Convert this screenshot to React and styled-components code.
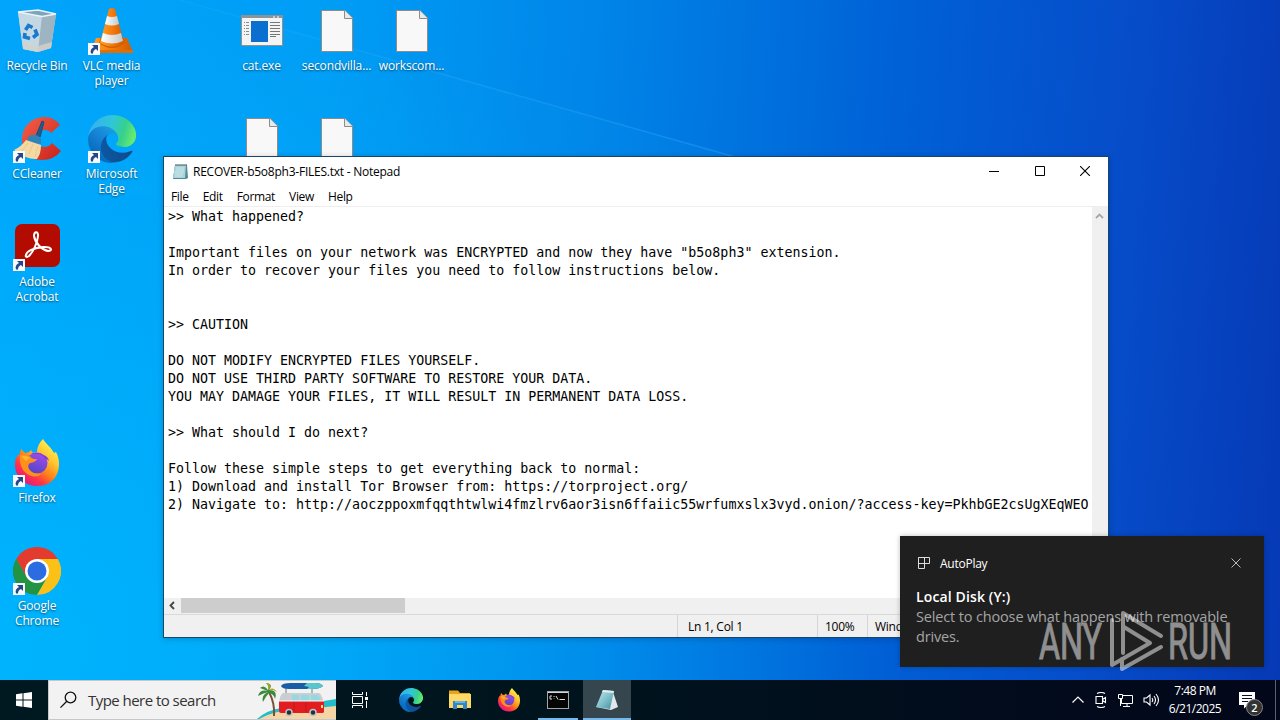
import React from 'react';
import styled, { createGlobalStyle } from 'styled-components';

const NOTE = `>> What happened?

Important files on your network was ENCRYPTED and now they have "b5o8ph3" extension.
In order to recover your files you need to follow instructions below.


>> CAUTION

DO NOT MODIFY ENCRYPTED FILES YOURSELF.
DO NOT USE THIRD PARTY SOFTWARE TO RESTORE YOUR DATA.
YOU MAY DAMAGE YOUR FILES, IT WILL RESULT IN PERMANENT DATA LOSS.

>> What should I do next?

Follow these simple steps to get everything back to normal:
1) Download and install Tor Browser from: https://torproject.org/
2) Navigate to: http://aoczppoxmfqqthtwlwi4fmzlrv6aor3isn6ffaiic55wrfumxslx3vyd.onion/?access-key=PkhbGE2csUgXEqWEO`;

// ---------- icons ----------

const RecycleIcon = () => (
    <svg width="48" height="48" viewBox="0 0 48 48">
        <path d="M5 5L25 3L43 7L38 41L25 45L10 42Z" fill="#b9cfdb" />
        <path d="M5 5L29 9L25 45L10 42Z" fill="#c3d8e3" />
        <path d="M29 9L43 7L38 41L25 45Z" fill="#9fb4c1" />
        <path d="M5 5L25 3L43 7L29 9.500Z" fill="#7fa3b8" stroke="#e9f4fa" strokeWidth="1.300" />
        <path d="M10 36L25 39L39 35L38 41L25 45L10 42Z" fill="#d5d2cb" opacity=".8" />
        <g fill="none" stroke="#1879cf" strokeWidth="3.600">
            <path d="M12.500 23L15.500 18.500L19.500 20.500" />
            <path d="M22 22.500L24 27.500L20 30.500" />
            <path d="M17 31.500L11.500 30L12 26" />
        </g>
    </svg>
);

const VlcIcon = () => (
    <svg width="48" height="48" viewBox="0 0 48 48">
        <defs>
            <linearGradient id="vlc" x1="0" x2="1">
                <stop offset="0" stopColor="#ffa329" />
                <stop offset=".5" stopColor="#f57b0b" />
                <stop offset="1" stopColor="#cf5a00" />
            </linearGradient>
            <linearGradient id="vlcWhite" x1="0" x2="1">
                <stop offset="0" stopColor="#fff" />
                <stop offset="1" stopColor="#c3c7ca" />
            </linearGradient>
        </defs>
        <path d="M8 31H39L45 45H3Z" fill="url(#vlc)" />
        <path d="M3 43H45V46H3Z" fill="#e06d05" />
        <path d="M11 36Q24 46 37 36L35 30H13Z" fill="#d35f00" />
        <path d="M21 2Q24 0 27 2L36 36Q24 43 12 36Z" fill="url(#vlc)" />
        <path d="M19 9Q24 11 29 9L31 17Q24 20 17 17Z" fill="url(#vlcWhite)" />
        <path d="M15 26Q24 30 33 26L35 34Q24 39 13 34Z" fill="url(#vlcWhite)" />
    </svg>
);

const CCleanerIcon = () => (
    <svg width="48" height="48" viewBox="0 0 48 48">
        <defs>
            <linearGradient id="cc" x1="0" y1="0" x2="1" y2="1">
                <stop offset="0" stopColor="#f4604a" />
                <stop offset="1" stopColor="#c9211b" />
            </linearGradient>
        </defs>
        <path d="M47 10Q41 2 32 2C18 2 9 12 9 25C9 38 17 45 29 45Q41 45 48 36L39 28Q36 32 31 32C26 32 23 29 23 24C23 18 27 15 32 15Q36 15 38 18Z" fill="url(#cc)" />
        <path d="M29 6L31 7L27 22L23 21Z" fill="#1d5d8e" stroke="#174e7a" />
        <path d="M15 22Q22 17 28 23L28 29L14 27Z" fill="#2f83b9" />
        <path d="M13 25L28 30Q28 39 24 44Q14 45 1 35Q8 32 13 25Z" fill="#f5d9a4" />
        <path d="M15 28L9 36M20 29L16 39M25 31L22 42" stroke="#ecc78b" fill="none" />
    </svg>
);

const EdgeIcon = ({ size }) => (
    <svg width={size} height={size} viewBox="0 0 256 256">
        <defs>
            <linearGradient id="edgeA" x1="60" x2="240" y1="177" y2="177" gradientUnits="userSpaceOnUse">
                <stop offset="0" stopColor="#0c59a4" />
                <stop offset="1" stopColor="#114a8b" />
            </linearGradient>
            <linearGradient id="edgeB" x1="150" x2="40" y1="90" y2="220" gradientUnits="userSpaceOnUse">
                <stop offset="0" stopColor="#1b9de2" />
                <stop offset=".5" stopColor="#1480d3" />
                <stop offset="1" stopColor="#0669bc" />
            </linearGradient>
            <linearGradient id="edgeC" x1="10" x2="240" y1="60" y2="130" gradientUnits="userSpaceOnUse">
                <stop offset="0" stopColor="#35b1f1" />
                <stop offset=".45" stopColor="#2fc7d8" />
                <stop offset=".75" stopColor="#36d08e" />
                <stop offset="1" stopColor="#66eb6e" />
            </linearGradient>
        </defs>
        <path fill="url(#edgeA)" d="M231 190.500c-3.400 1.800-6.900 3.400-10.500 4.700a101.500 101.500 0 0 1-35.600 6.400c-47 0-87.800-32.300-87.800-73.700A31.300 31.300 0 0 1 113.400 100.500C71 102.300 60 146.500 60 172.400c0 73.300 67.500 80.700 82.100 80.700 7.800 0 19.700-2.300 26.800-4.500l1.300-.5a127.900 127.900 0 0 0 66.400-52.600 4 4 0 0 0-5.600-5z" />
        <path fill="url(#edgeB)" d="M105.700 241.400a79.200 79.200 0 0 1-22.700-21.300 80.700 80.700 0 0 1 29.900-118.900c3.100-1.500 8.500-4.100 15.600-4a32.400 32.400 0 0 1 25.700 13 31.900 31.900 0 0 1 6.300 18.700c0-.2 24.500-79.600-80-79.600-43.900 0-80 41.700-80 78.200a130.200 130.200 0 0 0 12.100 56 128 128 0 0 0 156.400 67 75.500 75.500 0 0 1-63.300-9z" />
        <path fill="url(#edgeC)" d="M152.300 148.900c-.8 1-3.300 2.500-3.300 5.700 0 2.600 1.700 5.200 4.800 7.300 14.400 10.100 41.700 8.700 41.800 8.700a60 60 0 0 0 30.500-8.400 61.900 61.900 0 0 0 30.400-53.300c.3-22.400-8-37.300-11.300-43.900C224 24 178.600 0 129.200 0A128 128 0 0 0 1.200 126.200c.5-36.600 36.800-66.100 80-66.100 3.500 0 23.500.3 42 10 16.400 8.600 24.900 18.900 30.900 29.200 6.200 10.600 7.200 24.100 7.200 29.500s-2.700 13.300-9 20.100z" />
    </svg>
);

const AcrobatIcon = () => (
    <svg width="48" height="48" viewBox="0 0 48 48">
        <rect x="2" y="1" width="45" height="43" rx="7" fill="#b30b00" />
        <path d="M13 32C14 27 22 25 30 24C39 23.500 40 28 35 28C29 27 22 20 21 13C21 8 25.500 8 25 13C24.500 20 20 29 16 33C14 34.500 12 34 13 32Z" fill="none" stroke="#fff" strokeWidth="2" />
    </svg>
);

const FirefoxIcon = ({ size }) => (
    <svg width={size} height={size} viewBox="0 0 48 48">
        <defs>
            <linearGradient id="foxBody" x1=".85" y1=".1" x2=".2" y2=".95">
                <stop offset="0" stopColor="#fff44f" />
                <stop offset=".3" stopColor="#ffc22e" />
                <stop offset=".55" stopColor="#ff8017" />
                <stop offset=".75" stopColor="#ff3647" />
                <stop offset="1" stopColor="#e31587" />
            </linearGradient>
            <linearGradient id="foxGlobe" x1=".7" y1="0" x2=".3" y2="1">
                <stop offset="0" stopColor="#a24bf0" />
                <stop offset="1" stopColor="#5145c4" />
            </linearGradient>
        </defs>
        <path d="M30 0C33 5 38 8 41 14L43 13C47 20 47 30 43 37C39 44 32 47 24 47C11 47 2 37 2 26C2 20 4 17 6 15L6 18L8 10L12 14Q16 14 18 11L20 14L24 13C24 8 27 3 30 0Z" fill="url(#foxBody)" />
        <circle cx="24" cy="24" r="10.500" fill="url(#foxGlobe)" />
        <path d="M18 15Q25 12 30 16Q35 17 36 22Q33 19 32 20Q29 15 24 15Z" fill="#7d3fd5" />
        <path d="M7 16Q13 14 18 18Q18 20 24 20Q23 23 17 24Q14 26 16 30Q20 36 29 34Q24 40 16 36Q8 32 7 22Z" fill="#ff901b" />
        <path d="M8 17Q13 16 17 19L13 22Z" fill="#ffb52c" />
    </svg>
);

const ChromeIcon = () => (
    <svg width="48" height="48" viewBox="0 0 48 48">
        <path d="M44.800 12A24 24 0 0 0 3.200 12L13.600 30L24 12Z" fill="#e33b2e" />
        <path d="M3.200 12A24 24 0 0 0 24 48L34.400 30L13.600 30Z" fill="#229342" />
        <path d="M44.800 12A24 24 0 0 1 24 48L34.400 30L24 12Z" fill="#fbc116" />
        <circle cx="24" cy="24" r="12" fill="#fff" />
        <circle cx="24" cy="24" r="9.500" fill="#2b6de0" />
    </svg>
);

const ExeIcon = () => (
    <svg width="48" height="48" viewBox="0 0 48 48">
        <rect x="3.500" y="8.500" width="41" height="30" fill="#f4f4f4" stroke="#94908e" />
        <path d="M4 9H44V11H4Z" fill="#8d9499" />
        <path d="M35 10H37M39 10H41" stroke="#fff" />
        <rect x="13" y="14" width="17" height="21" fill="#0b6fd0" />
        <path d="M6 15.500H11M6 18.500H11M6 21.500H11M6 24.500H11M6 27.500H11" stroke="#8b8b8b" strokeDasharray="1 1 3" />
        <path d="M32 15.500H42M32 18.500H42M32 21.500H42M32 24.500H42M32 27.500H42M32 29.500H38" stroke="#777" />
    </svg>
);

const FileIcon = () => (
    <svg width="48" height="48" viewBox="0 0 48 48">
        <path d="M8.500 3.500H32L39.500 11V44.500H8.500Z" fill="#f8f8f8" stroke="#918b87" />
        <path d="M31.500 3.500V11.500H39.500" fill="#e5eaec" stroke="#918b87" />
    </svg>
);

const NotepadIcon = ({ size }) => (
    <svg width={size} height={size} viewBox="0 0 24 24">
        <defs>
            <linearGradient id="pad" x1="0" y1="0" x2="1" y2="1">
                <stop offset="0" stopColor="#c6e7ed" />
                <stop offset=".5" stopColor="#82c2ce" />
                <stop offset="1" stopColor="#438c9d" />
            </linearGradient>
        </defs>
        <path d="M18 4L23 19L16 22L1 19Z" fill="#e0e8e9" />
        <path d="M8 2L19 3L15 21L1 19Z" fill="url(#pad)" />
        <path d="M8 2L19 3L18.500 5L7 4Z" fill="#e0eff1" />
    </svg>
);

const TitleNotepadIcon = () => (
    <svg width="17" height="17" viewBox="0 0 17 17">
        <path d="M3 2H15L16 15L14 16H1Z" fill="#548c95" />
        <path d="M3 2H14L13 15H1Z" fill="#a5d4db" />
        <path d="M4 5H12M4 7H12M3 9H12M3 11H11M3 13H11" stroke="#d5eef1" strokeWidth=".8" />
        <path d="M3.500 2H15" stroke="#40555a" strokeWidth="2" strokeDasharray="1 1" />
    </svg>
);

const ExplorerIcon = () => (
    <svg width="24" height="24" viewBox="0 0 24 24">
        <path d="M1 4V2.500H10L12 5H22V20H1Z" fill="#e6a320" />
        <path d="M1 6H23V20H1Z" fill="#ffd866" />
        <path d="M5 13H19V21H15V17H9V21H5Z" fill="#2c89ca" />
        <path d="M7 13H17V15H7Z" fill="#62b6e8" />
    </svg>
);

const TerminalIcon = () => (
    <svg width="24" height="24" viewBox="0 0 24 24">
        <rect x="1.500" y="3.500" width="21" height="17" fill="#050505" stroke="#a5a5a5" />
        <path d="M2 4.500H22" stroke="#d6d6d6" />
        <path d="M6 8H4V11H6M8 8V9M8 10.500V11M10 8L12 11.500M13.500 11.500H19" stroke="#ddd" fill="none" />
    </svg>
);

const TaskViewIcon = () => (
    <svg width="18" height="18" viewBox="0 0 18 18" fill="none" stroke="#fff">
        <path d="M1.500 1V3.500H11.500V1M1.500 17V14.500H11.500V17M1.500 5.500H11.500V12.500H1.500ZM15.500 1V5M15.500 10V17" />
        <path d="M14 6H17V9H14Z" fill="#fff" stroke="none" />
    </svg>
);

const WindowsIcon = () => (
    <svg width="16" height="16" viewBox="0 0 16 16" fill="#fff">
        <path d="M0 2.200L6.500 1.300V7.500H0ZM7.500 1.200L16 0V7.500H7.500ZM0 8.500H6.500V14.700L0 13.800ZM7.500 8.500H16V16L7.500 14.800Z" />
    </svg>
);

const SearchIcon = () => (
    <svg width="18" height="18" viewBox="0 0 18 18" fill="none" stroke="#111" strokeWidth="1.300">
        <circle cx="10.500" cy="6.500" r="5.300" />
        <path d="M6.800 10.300L.5 16.600" />
    </svg>
);

const BeachArt = () => (
    <svg width="79" height="38" viewBox="0 0 79 38">
        <path d="M0 38Q10 29 24 27L79 18V38Z" fill="#24bccb" />
        <path d="M2 38Q18 29 40 29L79 25V38Z" fill="#f5d5a5" />
        <path d="M12 11Q18 22 17 35" stroke="#785132" strokeWidth="2" fill="none" />
        <path d="M11 10Q3 8 1 15Q7 12 11 11Q4 14 6 21Q9 15 12 12Q17 13 18 18Q21 9 12 9Q17 3 9 2Q13 5 11 9Q7 3 3 7Z" fill="#3c8939" />
        <path d="M12 9Q15 2 9 2Q12 5 11 9Q16 5 20 11Q15 8 12 9Z" fill="#a7a72a" />
        <path d="M29 7V12M55 7V12" stroke="#777" />
        <path d="M24 5Q25 2 34 2H58Q64 2 66 5Q63 8 55 8H32Q25 8 24 5Z" fill="#195ca5" />
        <path d="M50 2H58Q64 2 66 5Q63 8 55 8H50L52 6L47 5Z" fill="#57c7cb" />
        <path d="M26 12H62Q65 13 67 23H22Q22 15 26 12Z" fill="#c9ced0" />
        <path d="M35 14H42V20H35ZM44 14H52V20H44ZM54 14H61L64 20H54Z" fill="#91dae4" />
        <path d="M22 20H67V31Q67 32 65 32H24Q22 32 22 30Z" fill="#e21d21" />
        <path d="M22 20H67" stroke="#fff" />
        <path d="M49 21V31M37 21V31" stroke="#9f171a" strokeWidth=".6" />
        <g fill="#272d34" stroke="#bcc3c6" strokeWidth="1.500">
            <circle cx="32" cy="31.500" r="3" />
            <circle cx="56" cy="31.500" r="3" />
        </g>
        <path d="M65 24V27" stroke="#ffdf70" strokeWidth="2" />
    </svg>
);

const ShortcutArrow = () => (
    <svg width="12" height="12" viewBox="0 0 12 12">
        <rect width="12" height="12" fill="#f7f9fb" />
        <path d="M4 2H10V8L8 6Q5 7 5 10.500H3Q1.500 6 6 4Z" fill="#25478a" />
    </svg>
);

const DESKTOP_ICONS = [
    { name: 'Recycle Bin', col: 1, row: 1, icon: <RecycleIcon /> },
    { name: 'VLC media player', col: 2, row: 1, icon: <VlcIcon />, shortcut: true },
    { name: 'cat.exe', col: 4, row: 1, icon: <ExeIcon /> },
    { name: 'secondvilla...', col: 5, row: 1, icon: <FileIcon /> },
    { name: 'workscom...', col: 6, row: 1, icon: <FileIcon /> },
    { name: 'CCleaner', col: 1, row: 2, icon: <CCleanerIcon />, shortcut: true },
    { name: 'Microsoft Edge', col: 2, row: 2, icon: <EdgeIcon size={48} />, shortcut: true },
    { name: '', col: 4, row: 2, icon: <FileIcon /> },
    { name: '', col: 5, row: 2, icon: <FileIcon /> },
    { name: 'Adobe Acrobat', col: 1, row: 3, icon: <AcrobatIcon />, shortcut: true },
    { name: 'Firefox', col: 1, row: 5, icon: <FirefoxIcon size={48} />, shortcut: true },
    { name: 'Google Chrome', col: 1, row: 6, icon: <ChromeIcon />, shortcut: true },
];

const Notepad = () => (
    <NotepadWindow>
        <TitleBar>
            <TitleNotepadIcon />
            <Title>RECOVER-b5o8ph3-FILES.txt - Notepad</Title>
            <WindowButtons>
                <svg width="10" height="10"><path d="M0 5.500H10" stroke="#000" /></svg>
                <svg width="10" height="10"><path d="M.5.5H9.500V9.500H.5Z" stroke="#000" fill="none" /></svg>
                <svg width="10" height="10"><path d="M0 0L10 10M10 0L0 10" stroke="#000" strokeWidth="1.100" /></svg>
            </WindowButtons>
        </TitleBar>
        <MenuBar>
            {['File', 'Edit', 'Format', 'View', 'Help'].map((item) => <span key={item}>{item}</span>)}
        </MenuBar>
        <Editor>
            <NoteText>{NOTE}</NoteText>
            <VerticalScroll>
                <svg width="9" height="6"><path d="M1 5L4.500 1.500L8 5" stroke="#a9a9a9" strokeWidth="1.800" fill="none" /></svg>
            </VerticalScroll>
        </Editor>
        <HorizontalScroll>
            <svg width="17" height="15"><path d="M10 4L6.500 7.500L10 11" stroke="#444" strokeWidth="1.800" fill="none" /></svg>
            <Thumb />
        </HorizontalScroll>
        <StatusBar>
            <StatusCell $width={140}>Ln 1, Col 1</StatusCell>
            <StatusCell $width={50} $pad={7}>100%</StatusCell>
            <StatusCell $width={241} $pad={7}>Windows (CRLF)</StatusCell>
        </StatusBar>
    </NotepadWindow>
);

const AutoPlay = () => (
    <Toast>
        <ToastHeader>
            <svg width="12" height="12" viewBox="0 0 12 12" fill="none" stroke="#ddd">
                <path d="M.5.5H11.500V6.500H.5ZM6.500.5V11.500H.5V.5" />
            </svg>
            <span>AutoPlay</span>
            <svg width="10" height="10"><path d="M.5.5L9.500 9.500M9.500.5L.5 9.500" stroke="#bbb" /></svg>
        </ToastHeader>
        <ToastTitle>Local Disk (Y:)</ToastTitle>
        <ToastText>Select to choose what happens with removable drives.</ToastText>
    </Toast>
);

const Watermark = () => (
    <Mark width="200" height="64" viewBox="0 0 200 64">
        <g fill="#fff" stroke="#fff" strokeWidth="1" fontFamily="Roboto" fontSize="50">
            <text x="1" y="50" textLength="63" lengthAdjust="spacingAndGlyphs">ANY</text>
            <text x="130" y="50" textLength="64" lengthAdjust="spacingAndGlyphs">RUN</text>
        </g>
        <g fill="none" stroke="#fff" strokeWidth="4" strokeLinecap="round" strokeLinejoin="round">
            <path d="M85 44V4L123 27M74 11V56L112 34L86 18" />
            <path d="M84 50V60L123 38" />
        </g>
    </Mark>
);

const Taskbar = () => (
    <Bar>
        <TaskButton $width={48}><WindowsIcon /></TaskButton>
        <SearchBox>
            <SearchIcon />
            <span>Type here to search</span>
            <BeachArt />
        </SearchBox>
        <TaskButton $width={48}><TaskViewIcon /></TaskButton>
        <AppButtons>
            <TaskButton $width={48}><EdgeIcon size={24} /></TaskButton>
            <TaskButton $width={48}><ExplorerIcon /></TaskButton>
            <TaskButton $width={48}><FirefoxIcon size={24} /></TaskButton>
            <TaskButton $width={48} $line={40}><TerminalIcon /></TaskButton>
            <TaskButton $width={48} $line={48} $active><NotepadIcon size={24} /></TaskButton>
        </AppButtons>
        <Tray>
            <svg width="14" height="16" fill="none" stroke="#fff" strokeWidth="1.200"><path d="M1.500 10.500L7 5L12.500 10.500" /></svg>
            <svg width="14" height="16" fill="none" stroke="#fff" strokeWidth="1.100">
                <path d="M2 4.500H8.500V11.500H2ZM8.500 7.500L11.500 5.500V10.500L8.500 8.500M3 1.500Q7 -.5 11 1.500M3 14.500Q7 16.500 11 14.500" />
            </svg>
            <svg width="17" height="16" fill="none" stroke="#fff">
                <path d="M1.500 2.500H5.500V6.500H1.500ZM6 3.500H15.500V11.500H4.500V7M10 12V14.500M6 14.500H13M3.500 7V14" />
            </svg>
            <svg width="17" height="16" fill="none" stroke="#fff" strokeWidth="1.100">
                <path d="M1 6H3.500L7 3V13L3.500 10H1ZM9 6Q10.500 8 9 10M11 4Q14 8 11 12M13 2Q18 8 13 14" />
            </svg>
            <Clock>
                <span>7:48 PM</span>
                <span>6/21/2025</span>
            </Clock>
            <ActionCenter>
                <svg width="17" height="17"><path d="M0 0H16V13H9L5 16.500V13H0Z" fill="#fff" /><path d="M3 3.500H13M3 6.500H13M3 9.500H9" stroke="#07101d" /></svg>
                <Count>2</Count>
            </ActionCenter>
        </Tray>
        <ShowDesktop />
    </Bar>
);

export default function App() {
    return (
        <>
            <GlobalStyle />
            <Desktop>
                <Beam viewBox="0 0 1280 680" preserveAspectRatio="none">
                    <defs>
                        <linearGradient id="beam" x1="190" x2="760" y1="0" y2="160" gradientUnits="userSpaceOnUse">
                            <stop offset="0" stopColor="#4bc0ff" stopOpacity=".1" />
                            <stop offset="1" stopColor="#43adff" stopOpacity=".35" />
                        </linearGradient>
                    </defs>
                    <path d="M180 0L760 164" stroke="url(#beam)" strokeWidth="1.600" />
                    <path d="M180 0L760 164L500 240L0 180V0Z" fill="#18b4ff" opacity=".06" />
                </Beam>
                <IconGrid>
                    {DESKTOP_ICONS.map(({ name, col, row, icon, shortcut }) => (
                        <DesktopItem key={`${col}-${row}`} $col={col} $row={row}>
                            <IconBox>
                                {icon}
                                {shortcut && <Badge><ShortcutArrow /></Badge>}
                            </IconBox>
                            <Label>{name}</Label>
                        </DesktopItem>
                    ))}
                </IconGrid>
                <Notepad />
                <AutoPlay />
                <Watermark />
            </Desktop>
            <Taskbar />
        </>
    );
}

// ---------- styles ----------

const GlobalStyle = createGlobalStyle`
    * {
        box-sizing: border-box;
    }
    body {
        margin: 0;
        overflow: hidden;
        font-family: 'Open Sans', 'Noto Sans', sans-serif;
        font-size: 12px;
    }
    svg {
        display: block;
        flex-shrink: 0;
    }
`;
const Desktop = styled.main`
    position: relative;
    height: 680px;
    overflow: hidden;
    background:
        radial-gradient(ellipse 900px 640px at 0% 95%, rgba(0, 190, 255, 0.6), rgba(0, 170, 255, 0) 100%),
        linear-gradient(94deg, #00a4fb 0%, #009df5 25%, #0085e8 45%, #0061d6 68%, #064dca 85%, #0639b5 100%);
`;
const Beam = styled.svg`
    position: absolute;
    inset: 0;
    width: 100%;
    height: 100%;
`;
const IconGrid = styled.div`
    position: relative;
    display: grid;
    width: 449px;
    grid-template-columns: 74px repeat(5, 75px);
    grid-template-rows: repeat(6, 108px);
`;
const DesktopItem = styled.div`
    grid-column: ${({ $col }) => $col};
    grid-row: ${({ $row }) => $row};
    display: flex;
    flex-direction: column;
    align-items: center;
    padding-top: 7px;
`;
const IconBox = styled.div`
    position: relative;
    width: 48px;
    height: 48px;
`;
const Badge = styled.div`
    position: absolute;
    left: 0;
    bottom: 0;
`;
const Label = styled.span`
    margin-top: 3px;
    width: 73px;
    color: #fff;
    font-size: 12px;
    line-height: 15px;
    letter-spacing: -0.14px;
    text-align: center;
    text-shadow: 0 1px 2px rgba(0, 0, 0, 0.55);
`;
const NotepadWindow = styled.section`
    position: absolute;
    left: 163px;
    top: 156px;
    width: 946px;
    height: 482px;
    display: flex;
    flex-direction: column;
    border: 1px solid #17456b;
    background: #fff;
    box-shadow: 0 1px 6px rgba(0, 0, 0, 0.2);
`;
const TitleBar = styled.header`
    display: flex;
    align-items: center;
    height: 30px;
    padding: 0 18px 2px 8px;
`;
const Title = styled.span`
    margin-left: 4px;
    letter-spacing: -0.24px;
`;
const WindowButtons = styled.div`
    display: flex;
    margin-left: auto;
    gap: 35.5px;
`;
const MenuBar = styled.nav`
    display: flex;
    gap: 14px;
    height: 20px;
    padding-left: 7px;
    line-height: 20px;
    letter-spacing: -0.33px;
    border-bottom: 1px solid #eee;
`;
const Editor = styled.div`
    display: flex;
    height: 391px;
`;
const NoteText = styled.pre`
    flex: 1;
    margin: 0;
    padding: 1px 0 0 4px;
    overflow: hidden;
    font-family: 'DejaVu Sans Mono', monospace;
    font-size: 13.3px;
    line-height: 18px;
`;
const VerticalScroll = styled.div`
    width: 16px;
    padding: 6px 0 0 3px;
    background: #f0f0f0;
`;
const HorizontalScroll = styled.div`
    display: flex;
    align-items: flex-start;
    height: 16px;
    background: #f0f0f0;
`;
const Thumb = styled.div`
    width: 224px;
    height: 15px;
    background: #cdcdcd;
`;
const StatusBar = styled.footer`
    display: flex;
    justify-content: flex-end;
    flex: 1;
    border-top: 1px solid #d9d9d9;
    background: #f0f0f0;
    line-height: 24px;
    letter-spacing: -0.25px;
`;
const StatusCell = styled.span`
    width: ${({ $width }) => $width}px;
    height: 22px;
    padding-left: ${({ $pad }) => $pad || 10}px;
    border-left: 1px solid #d5d5d5;
    white-space: nowrap;
`;
const Toast = styled.aside`
    position: absolute;
    left: 900px;
    top: 536px;
    width: 364px;
    height: 131px;
    padding: 17px 16px;
    background: #1f1f1f;
    color: #fff;
    box-shadow: 0 0 5px rgba(0, 0, 0, 0.25);
`;
const ToastHeader = styled.div`
    display: flex;
    align-items: center;
    height: 19px;
    padding: 0 7px 0 2px;

    span {
        flex: 1;
        margin: 1px 0 0 10px;
        letter-spacing: -0.25px;
    }
`;
const ToastTitle = styled.div`
    margin-top: 15px;
    font-size: 14px;
    font-weight: 600;
    line-height: 20px;
    letter-spacing: 0.13px;
`;
const ToastText = styled.div`
    color: #a5a5a5;
    font-size: 14.5px;
    line-height: 20px;
    letter-spacing: -0.15px;
`;
const Mark = styled.svg`
    position: absolute;
    left: 1038px;
    top: 609px;
    overflow: visible;
    opacity: 0.5;
`;
const Bar = styled.footer`
    display: flex;
    height: 40px;
    background: linear-gradient(90deg, #001820, #00131d 50%, #020b1c 80%, #020719);
`;
const TaskButton = styled.div`
    display: flex;
    align-items: center;
    justify-content: center;
    width: ${({ $width }) => $width}px;
    height: 40px;
    background:
        linear-gradient(#76b9ed, #76b9ed) center bottom / ${({ $line }) => $line || 0}px 2px no-repeat,
        ${({ $active }) => ($active ? '#35464e' : 'transparent')};
`;
const SearchBox = styled.div`
    display: flex;
    align-items: center;
    width: 288px;
    height: 40px;
    padding-left: 11px;
    border: 1px solid #c5c8ca;
    border-right: 0;
    background: #f2f2f2;
    color: #333;
    font-size: 15px;

    span {
        flex: 1;
        margin-left: 10px;
        letter-spacing: -0.54px;
    }
`;
const AppButtons = styled.div`
    display: flex;
    gap: 1px;
    margin-left: 3px;
`;
const Tray = styled.div`
    display: flex;
    align-items: center;
    gap: 9px;
    margin-left: auto;
`;
const Clock = styled.div`
    display: flex;
    flex-direction: column;
    align-items: center;
    width: 54px;
    margin-left: -1px;
    color: #fff;
    line-height: 18px;
    letter-spacing: -0.5px;
`;
const ActionCenter = styled.div`
    position: relative;
    margin: 0 9px 0 8px;
    width: 27px;
    height: 17px;
`;
const Count = styled.span`
    position: absolute;
    left: 7px;
    top: 7px;
    width: 17px;
    height: 17px;
    border: 1px solid #858585;
    border-radius: 50%;
    background: #333;
    color: #fff;
    font-size: 11px;
    font-weight: 600;
    line-height: 15px;
    text-align: center;
`;
const ShowDesktop = styled.div`
    width: 5px;
    border-left: 1px solid #59616c;
`;
